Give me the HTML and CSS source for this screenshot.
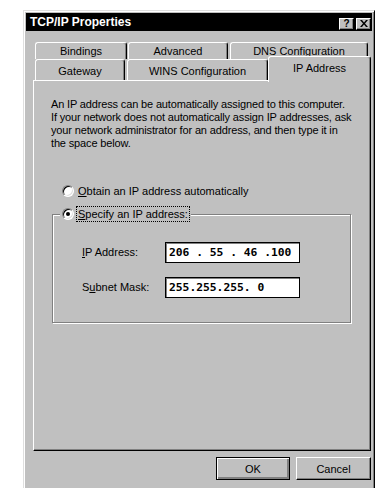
FILE: index.html
```html
<!DOCTYPE html>
<html lang="en">
<head>
    <meta charset="UTF-8">
    <title>TCP/IP Properties</title>
    <link rel="stylesheet" href="styles.css">
</head>
<body>
    <div class="window">
        <div class="titlebar">
            <span class="title">TCP/IP Properties</span>
            <span class="caption-buttons">
                <span class="caption-btn help">?</span>
                <span class="caption-btn close">
                    <svg width="8" height="7" viewBox="0 0 8 7"><path d="M0 0h2l2 2.5L6 0h2L5 3.5 8 7H6L4 4.5 2 7H0l3-3.5z" fill="#000"/></svg>
                </span>
            </span>
        </div>

        <div class="tabs">
            <div class="tab-row back">
                <div class="tab tab-bindings">Bindings</div>
                <div class="tab tab-advanced">Advanced</div>
                <div class="tab tab-dns">DNS Configuration</div>
            </div>
            <div class="tab-row front">
                <div class="tab tab-gateway">Gateway</div>
                <div class="tab tab-wins">WINS Configuration</div>
                <div class="tab tab-ip selected">IP Address</div>
            </div>
        </div>

        <div class="panel">
            <p class="intro">An IP address can be automatically assigned to this computer.
If your network does not automatically assign IP addresses, ask
your network administrator for an address, and then type it in
the space below.</p>

            <div class="radio obtain">
                <span class="radio-dot"></span>
                <span class="radio-label"><u>O</u>btain an IP address automatically</span>
            </div>

            <fieldset class="group">
                <legend class="radio">
                    <span class="radio-dot checked"></span>
                    <span class="radio-label focused"><u>S</u>pecify an IP address:</span>
                </legend>
                <div class="field-row">
                    <span class="field-label"><u>I</u>P Address:</span>
                    <span class="ip-box">206 . 55 . 46 .100</span>
                </div>
                <div class="field-row">
                    <span class="field-label">S<u>u</u>bnet Mask:</span>
                    <span class="ip-box">255.255.255. 0</span>
                </div>
            </fieldset>
        </div>

        <div class="buttons">
            <button class="btn default">OK</button>
            <button class="btn">Cancel</button>
        </div>
    </div>
</body>
</html>
```

FILE: styles.css
```css
body {
    margin: 0;
    background-color: #fff;
    font-family: "Liberation Sans", Arial, sans-serif;
    font-size: 11px;
    color: #000;
    overflow: hidden;
}

.window {
    box-sizing: border-box;
    margin: 10px 0 0 23px;
    width: 352px;
    height: 500px;
    padding: 2px;
    background-color: #c0c0c0;
    border: 1px solid;
    border-color: #dfdfdf #000 #000 #dfdfdf;
    box-shadow: inset 1px 1px #fff, inset -1px -1px #808080;
}

.titlebar {
    display: flex;
    align-items: center;
    justify-content: space-between;
    height: 18px;
    padding: 0 1px 0 4px;
    background-color: #000;
}

.title {
    color: #fff;
    font-weight: bold;
    font-size: 12px;
}

.caption-buttons {
    display: flex;
    gap: 2px;
    margin-top: 3px;
}

.caption-btn {
    box-sizing: border-box;
    display: flex;
    align-items: center;
    justify-content: center;
    width: 15px;
    height: 12px;
    background-color: #c0c0c0;
    border: 1px solid;
    border-color: #fff #000 #000 #fff;
    box-shadow: inset -1px -1px #808080;
    font-weight: bold;
    font-size: 10px;
    line-height: 10px;
}

/* tabs */
.tabs {
    margin: 11px 0 0 7px;
    width: 338px;
}

.tab-row {
    display: flex;
    padding-left: 2px;
}

.tab-row.back {
    height: 17px;
}

.tab-row.front {
    height: 21px;
    align-items: flex-end;
}

.tab {
    box-sizing: border-box;
    display: flex;
    align-items: center;
    justify-content: center;
    height: 100%;
    line-height: 12px;
    background-color: #c0c0c0;
    border-top: 1px solid #fff;
    border-left: 1px solid #fff;
    border-right: 1px solid #000;
    border-radius: 3px 3px 0 0;
    box-shadow: inset -1px 0 #808080;
}

.tab-bindings { width: 92px; margin-right: 1px; }
.tab-advanced { width: 100px; margin-right: 2px; }
.tab-dns { width: 138px; }
.tab-gateway { width: 90px; margin-right: 2px; }
.tab-wins { width: 141px; }
.tab-ip { width: 103px; }

.tab.selected {
    position: relative;
    z-index: 1;
    height: 26px;
    margin-bottom: -2px;
    padding-bottom: 5px;
}

.tab-row.back .tab {
    padding-bottom: 1px;
}

.tab-row.front .tab {
    padding-top: 1px;
}

/* panel */
.panel {
    box-sizing: border-box;
    margin-left: 7px;
    width: 338px;
    height: 371px;
    padding: 17px 0 0 17px;
    border: 1px solid;
    border-color: #fff #000 #000 #fff;
    box-shadow: inset -1px -1px #808080;
}

.intro {
    margin: 0;
    line-height: 13px;
    letter-spacing: -0.15px;
    white-space: pre-line;
}

.radio {
    display: flex;
    align-items: center;
    height: 14px;
    line-height: 14px;
}

.radio.obtain {
    margin: 34px 0 0 11px;
}

.radio-dot {
    position: relative;
    box-sizing: border-box;
    width: 12px;
    height: 12px;
    margin-right: 4px;
    border-radius: 50%;
    background-color: #fff;
    border: 1px solid;
    border-color: #808080 #fff #fff #808080;
    box-shadow: inset 1px 1px #000, inset -1px -1px #dfdfdf;
}

.radio-dot.checked::after {
    content: "";
    position: absolute;
    left: 3px;
    top: 3px;
    width: 4px;
    height: 4px;
    border-radius: 50%;
    background-color: #000;
}

.radio-label.focused {
    outline: 1px dotted #000;
    outline-offset: 0;
    padding: 0 1px;
    margin-left: -1px;
}

.group {
    box-sizing: border-box;
    width: 299px;
    margin: 9px 0 0 1px;
    padding: 21px 0 25px 29px;
    border: 1px solid #808080;
    box-shadow: 1px 1px #fff, inset 1px 1px #fff;
}

.group legend {
    margin-left: -22px;
    padding: 0 2px;
    background-color: #c0c0c0;
}

.field-row {
    display: flex;
    align-items: center;
    height: 20px;
}

.field-row + .field-row {
    margin-top: 15px;
}

.field-label {
    width: 83px;
}

.ip-box {
    box-sizing: border-box;
    width: 135px;
    height: 21px;
    padding: 0 3px;
    background-color: #fff;
    border: 1px solid #000;
    box-shadow: inset 1px 1px #808080;
    font-family: "DejaVu Sans Mono", "Liberation Mono", monospace;
    font-weight: bold;
    font-size: 11.3px;
    line-height: 19px;
    white-space: pre;
}

/* dialog buttons */
.buttons {
    display: flex;
    justify-content: flex-end;
    gap: 6px;
    margin-top: 6px;
    padding-right: 1px;
}

.btn {
    box-sizing: border-box;
    width: 75px;
    height: 23px;
    padding: 0;
    background-color: #c0c0c0;
    border: 1px solid;
    border-color: #fff #000 #000 #fff;
    box-shadow: inset -1px -1px #808080;
    font-family: "Liberation Sans", Arial, sans-serif;
    font-size: 11px;
    color: #000;
}

.btn.default {
    width: 74px;
    border: 1px solid #000;
    box-shadow: inset 1px 1px #fff, inset -2px -2px #808080;
}
```
